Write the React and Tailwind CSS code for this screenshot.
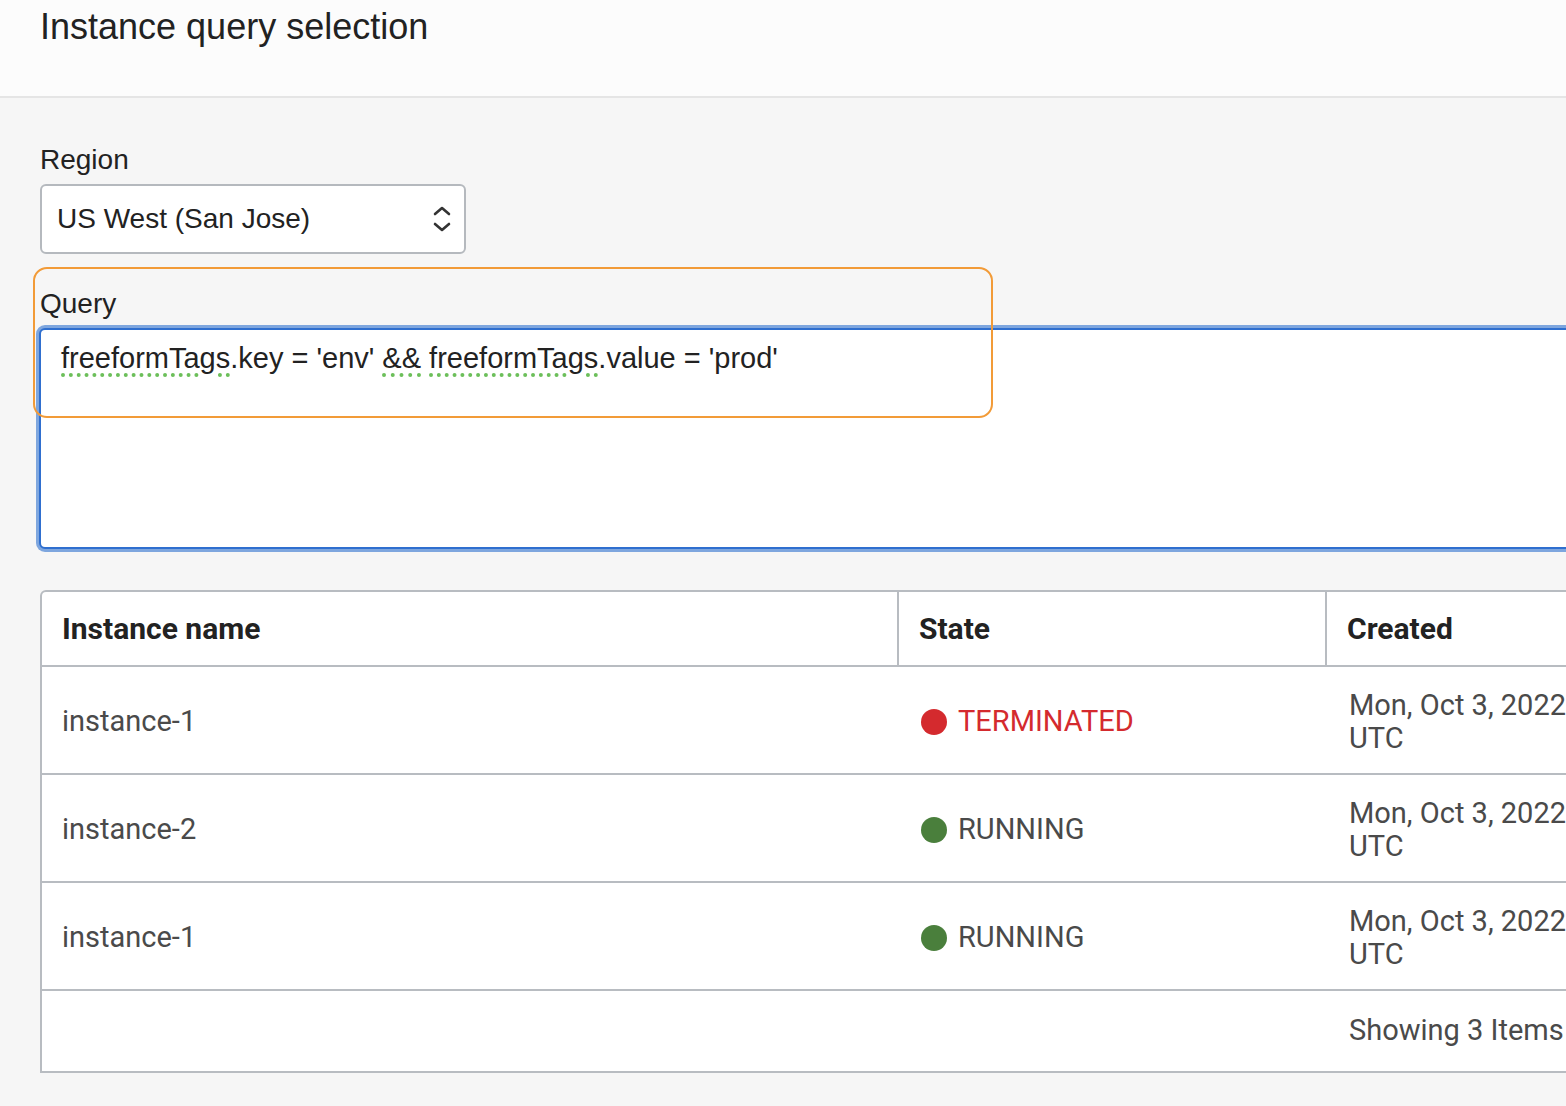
const rows = [
  { name: 'instance-1', state: 'TERMINATED', created: 'Mon, Oct 3, 2022, 4:12:09 PM UTC' },
  { name: 'instance-2', state: 'RUNNING', created: 'Mon, Oct 3, 2022, 4:05:51 PM UTC' },
  { name: 'instance-1', state: 'RUNNING', created: 'Mon, Oct 3, 2022, 3:58:27 PM UTC' },
];

const Spell = ({ children }) => (
  <span className="underline decoration-dotted decoration-[#6cbf5a] decoration-[4px] underline-offset-[5px]">
    {children}
  </span>
);

const StateCell = ({ state }) => {
  const terminated = state === 'TERMINATED';
  return (
    <div className="flex items-center gap-[11px]">
      <span className={`w-[26px] h-[26px] rounded-full ${terminated ? 'bg-[#d42a2e]' : 'bg-[#4a7f3c]'}`} />
      <span className={terminated ? 'text-[#d42a2e]' : 'text-[#4a4a4a]'}>{state}</span>
    </div>
  );
};

export default function App() {
  return (
    <div className="w-[1566px] h-[1106px] overflow-hidden bg-[#f6f6f6] font-['Liberation_Sans',Arial,sans-serif] text-[#222]">
      <header className="h-[98px] bg-[#fcfcfc] border-b-2 border-[#e5e5e5] px-10 pt-[6px]">
        <h1 className="text-[36px] leading-[42px] text-[#222]">Instance query selection</h1>
      </header>

      <main className="px-10 pt-[46px]">
        <label className="block text-[28px] leading-[32px]">Region</label>
        <div className="mt-2 w-[426px] h-[70px] bg-white border-2 border-[#b5b9be] rounded-md flex items-center justify-between pl-[15px] pr-[12px]">
          <span className="text-[28px]">US West (San Jose)</span>
          <svg width="20" height="30" viewBox="0 0 20 30" fill="none" stroke="#333" strokeWidth="2.6" strokeLinecap="round" strokeLinejoin="round">
            <path d="M3 10 L10 4 L17 10" />
            <path d="M3 20 L10 26 L17 20" />
          </svg>
        </div>

        <div className="relative mt-[34px]">
          <label className="block text-[28px] leading-[32px]">Query</label>
          <div className="mt-[8px] -ml-[1px] w-[1600px] h-[221px] bg-white border-2 border-[#2f6fcf] rounded-md ring-[3px] ring-[#7ea6de] px-5 pt-[10px]">
            <p className="text-[29px] leading-[36px] text-[#222]">
              <Spell>freeformTags</Spell>.key = 'env' <Spell>&amp;&amp;</Spell> <Spell>freeformTags</Spell>.value = 'prod'
            </p>
          </div>
          <div className="absolute -left-[7px] -top-[21px] w-[960px] h-[151px] border-2 border-[#f29b38] rounded-[14px] pointer-events-none" />
        </div>

        <div className="mt-[41px] w-[1600px] bg-white border-2 border-[#b8bcc1] rounded-tl-md font-['Roboto',sans-serif]">
          <div className="flex h-[75px] border-b-2 border-[#b8bcc1] text-[30px] font-bold text-[#222]">
            <div className="w-[857px] flex items-center px-5 border-r-2 border-[#b8bcc1]">Instance name</div>
            <div className="w-[428px] flex items-center px-5 border-r-2 border-[#b8bcc1]">State</div>
            <div className="flex-1 flex items-center px-5">Created</div>
          </div>
          {rows.map((row, i) => (
            <div key={i} className="flex h-[108px] pt-[3px] border-b-2 border-[#b8bcc1] text-[29px] text-[#4a4a4a]">
              <div className="w-[859px] flex items-center px-5">{row.name}</div>
              <div className="w-[428px] flex items-center px-5">
                <StateCell state={row.state} />
              </div>
              <div className="w-[260px] flex items-center px-5 leading-[33px]">
                <span className="whitespace-nowrap">
                  {row.created.replace(' UTC', '')}
                  <br />
                  UTC
                </span>
              </div>
            </div>
          ))}
          <div className="flex h-[80px] items-center text-[29px] text-[#4a4a4a]">
            <div className="w-[1287px]" />
            <div className="px-5">Showing 3 Items</div>
          </div>
        </div>
      </main>
    </div>
  );
}
